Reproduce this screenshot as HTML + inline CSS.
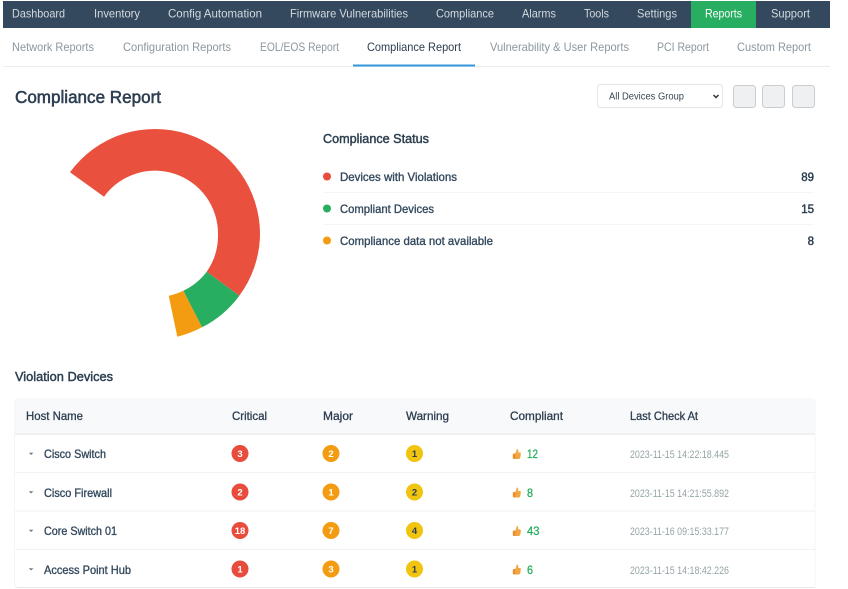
<!DOCTYPE html>
<html lang="en">
<head>
<meta charset="utf-8">
<title>Compliance Report</title>
<style>
html,body{margin:0;padding:0;background:#fff;width:848px;height:589px;overflow:hidden}
svg{display:block;position:absolute;left:0;top:0;filter:blur(.25px)}
text{font-family:"Liberation Sans",Arial,sans-serif}
.n{font-size:12px;fill:#d3d9df}
.t{font-size:12px;fill:#8b979f}
.h{font-size:12px;fill:#2c3e50;stroke:#2c3e50;stroke-width:.3px}
.s{font-size:12px;fill:#34495e;stroke:#34495e;stroke-width:.35px}
.v{font-size:11.500px;fill:#2c3e50;stroke:#2c3e50;stroke-width:.45px;text-anchor:end}
.b{font-size:9.500px;font-weight:bold;fill:#fff;text-anchor:middle}
.k{font-size:9.500px;font-weight:bold;fill:#2c3e50;text-anchor:middle}
.c{font-size:12px;fill:#27ae60;stroke:#27ae60;stroke-width:.3px}
.d{font-size:11px;fill:#95a5a6}
</style>
</head>
<body>
<svg width="848" height="589" viewBox="0 0 848 589" xmlns="http://www.w3.org/2000/svg">
<rect x="3" y="1" width="827" height="27" fill="#34495e"/>
<rect x="691" y="1" width="65" height="27" fill="#27ae60"/>
<text class="n" x="12" y="17.500" textLength="53" lengthAdjust="spacingAndGlyphs">Dashboard</text>
<text class="n" x="94" y="17.500" textLength="46" lengthAdjust="spacingAndGlyphs">Inventory</text>
<text class="n" x="168" y="17.500" textLength="94" lengthAdjust="spacingAndGlyphs">Config Automation</text>
<text class="n" x="290" y="17.500" textLength="118" lengthAdjust="spacingAndGlyphs">Firmware Vulnerabilities</text>
<text class="n" x="436" y="17.500" textLength="58" lengthAdjust="spacingAndGlyphs">Compliance</text>
<text class="n" x="522" y="17.500" textLength="34" lengthAdjust="spacingAndGlyphs">Alarms</text>
<text class="n" x="584" y="17.500" textLength="25" lengthAdjust="spacingAndGlyphs">Tools</text>
<text class="n" x="637" y="17.500" textLength="40" lengthAdjust="spacingAndGlyphs">Settings</text>
<text class="n" x="705" y="17.500" textLength="37" lengthAdjust="spacingAndGlyphs" style="fill:#fff">Reports</text>
<text class="n" x="771" y="17.500" textLength="39" lengthAdjust="spacingAndGlyphs">Support</text>

<rect x="3" y="66" width="827" height="1" fill="#ececec"/>
<rect x="353" y="64.500" width="122" height="2" fill="#3498db"/>
<text class="t" x="12" y="51" textLength="82" lengthAdjust="spacingAndGlyphs">Network Reports</text>
<text class="t" x="123" y="51" textLength="108" lengthAdjust="spacingAndGlyphs">Configuration Reports</text>
<text class="t" x="260" y="51" textLength="79" lengthAdjust="spacingAndGlyphs">EOL/EOS Report</text>
<text class="t" x="367" y="51" textLength="94" lengthAdjust="spacingAndGlyphs" style="fill:#2c3e50">Compliance Report</text>
<text class="t" x="490" y="51" textLength="139" lengthAdjust="spacingAndGlyphs">Vulnerability &amp; User Reports</text>
<text class="t" x="657" y="51" textLength="52" lengthAdjust="spacingAndGlyphs">PCI Report</text>
<text class="t" x="737" y="51" textLength="74" lengthAdjust="spacingAndGlyphs">Custom Report</text>

<text x="15" y="103" textLength="146" lengthAdjust="spacingAndGlyphs" style="font-size:17.500px;fill:#2c3e50;stroke:#2c3e50;stroke-width:.55px">Compliance Report</text>

<rect x="597.500" y="84.500" width="125" height="23" rx="3" fill="#fff" stroke="#e6e6e6"/>
<text x="609" y="99.500" textLength="75" lengthAdjust="spacingAndGlyphs" style="font-size:10px;fill:#3a4654">All Devices Group</text>
<path d="M713.500 95l2.500 2.500 2.500-2.500" fill="none" stroke="#333" stroke-width="1.500"/>
<rect x="733.500" y="85.500" width="22" height="22" rx="3" fill="#eef0f1" stroke="#c9cdd0"/>
<rect x="762.500" y="85.500" width="22" height="22" rx="3" fill="#eef0f1" stroke="#c9cdd0"/>
<rect x="792.500" y="85.500" width="22" height="22" rx="3" fill="#eef0f1" stroke="#c9cdd0"/>

<path d="M70 172.300A105 105 0 0 1 260 234.500A105 105 0 0 1 239.300 295.700L206.700 271.700A63 63 0 0 0 218 234.500A63 63 0 0 0 104 196.700Z" fill="#ea503e"/>
<path d="M239.300 295.700A105 105 0 0 1 202 327.300L183.300 290.700A63 63 0 0 0 206.700 271.700Z" fill="#27ae60"/>
<path d="M202 327.300A105 105 0 0 1 177.300 336.700L168.700 295.700A63 63 0 0 0 183.300 290.700Z" fill="#f39c12"/>

<text x="323" y="143" textLength="106" lengthAdjust="spacingAndGlyphs" style="font-size:13px;fill:#2c3e50;stroke:#2c3e50;stroke-width:.45px">Compliance Status</text>
<rect x="323" y="192" width="491" height="1" fill="#f4f5f5"/>
<rect x="323" y="224" width="491" height="1" fill="#f4f5f5"/>
<circle cx="327" cy="176.500" r="4" fill="#e74c3c"/>
<circle cx="327" cy="208.500" r="4" fill="#27ae60"/>
<circle cx="327" cy="240.500" r="4" fill="#f39c12"/>
<text class="s" x="340" y="181" textLength="117" lengthAdjust="spacingAndGlyphs">Devices with Violations</text>
<text class="s" x="340" y="213" textLength="94" lengthAdjust="spacingAndGlyphs">Compliant Devices</text>
<text class="s" x="340" y="245" textLength="153" lengthAdjust="spacingAndGlyphs">Compliance data not available</text>
<text class="v" x="814" y="181">89</text>
<text class="v" x="814" y="213">15</text>
<text class="v" x="814" y="245">8</text>

<text x="15" y="381" textLength="98" lengthAdjust="spacingAndGlyphs" style="font-size:13px;fill:#2c3e50;stroke:#2c3e50;stroke-width:.45px">Violation Devices</text>

<rect x="15" y="398" width="800" height="190" rx="4" fill="#fff"/>
<rect x="14.500" y="398.500" width="800.500" height="189.500" rx="4" fill="none" stroke="#f4f5f6"/>
<path d="M15 433V402a4 4 0 0 1 4-4H811a4 4 0 0 1 4 4V433Z" fill="#f8f9fa"/>
<rect x="15" y="433" width="800" height="2" fill="#eef0f1"/>
<rect x="15" y="472" width="800" height="1" fill="#f1f2f3"/>
<rect x="15" y="510.500" width="800" height="1" fill="#f1f2f3"/>
<rect x="15" y="549" width="800" height="1" fill="#f1f2f3"/>
<rect x="15" y="587" width="800" height="1" fill="#e9ebec"/>

<text class="h" x="26" y="420" textLength="57" lengthAdjust="spacingAndGlyphs">Host Name</text>
<text class="h" x="232" y="420" textLength="35" lengthAdjust="spacingAndGlyphs">Critical</text>
<text class="h" x="323" y="420" textLength="30" lengthAdjust="spacingAndGlyphs">Major</text>
<text class="h" x="406" y="420" textLength="43" lengthAdjust="spacingAndGlyphs">Warning</text>
<text class="h" x="510" y="420" textLength="53" lengthAdjust="spacingAndGlyphs">Compliant</text>
<text class="h" x="630" y="420" textLength="68" lengthAdjust="spacingAndGlyphs">Last Check At</text>

<path d="M28.800 452.800h4.600l-2.300 2.200z" fill="#777"/>
<path d="M28.800 491.300h4.600l-2.300 2.200z" fill="#777"/>
<path d="M28.800 529.800h4.600l-2.300 2.200z" fill="#777"/>
<path d="M28.800 568.300h4.600l-2.300 2.200z" fill="#777"/>
<text class="s" x="44" y="458" textLength="62" lengthAdjust="spacingAndGlyphs">Cisco Switch</text>
<text class="s" x="44" y="497" textLength="68" lengthAdjust="spacingAndGlyphs">Cisco Firewall</text>
<text class="s" x="44" y="535" textLength="73" lengthAdjust="spacingAndGlyphs">Core Switch 01</text>
<text class="s" x="44" y="574" textLength="87" lengthAdjust="spacingAndGlyphs">Access Point Hub</text>

<circle cx="240" cy="453.500" r="8.500" fill="#e74c3c"/><text class="b" x="240" y="456.800">3</text>
<circle cx="240" cy="492" r="8.500" fill="#e74c3c"/><text class="b" x="240" y="495.300">2</text>
<circle cx="240" cy="530.500" r="8.500" fill="#e74c3c"/><text class="b" x="240" y="533.800">18</text>
<circle cx="240" cy="569" r="8.500" fill="#e74c3c"/><text class="b" x="240" y="572.300">1</text>

<circle cx="331" cy="453.500" r="8.500" fill="#f39c12"/><text class="b" x="331" y="456.800">2</text>
<circle cx="331" cy="492" r="8.500" fill="#f39c12"/><text class="b" x="331" y="495.300">1</text>
<circle cx="331" cy="530.500" r="8.500" fill="#f39c12"/><text class="b" x="331" y="533.800">7</text>
<circle cx="331" cy="569" r="8.500" fill="#f39c12"/><text class="b" x="331" y="572.300">3</text>

<circle cx="414.500" cy="453.500" r="8.500" fill="#f1c40f"/><text class="k" x="414.500" y="456.800">1</text>
<circle cx="414.500" cy="492" r="8.500" fill="#f1c40f"/><text class="k" x="414.500" y="495.300">2</text>
<circle cx="414.500" cy="530.500" r="8.500" fill="#f1c40f"/><text class="k" x="414.500" y="533.800">4</text>
<circle cx="414.500" cy="569" r="8.500" fill="#f1c40f"/><text class="k" x="414.500" y="572.300">1</text>

<defs><g id="th"><path d="M4 0C5.200 0 5.600 1.200 5.400 2.400L5.200 3.400H6.800C7.700 3.400 8.200 4.100 8 5L7.500 8.500C7.300 9.400 6.700 10 5.800 10H2.200C1.900 7 2 5.600 2.400 4.600 3.200 3.400 3.600 1.600 4 0Z" fill="#f3a63f"/><path d="M0 5.500C0 4.900.5 4.500 1 4.500H2.600V10H1.200C.5 10 0 9.500 0 8.800Z" fill="#e8902e"/></g></defs>
<use href="#th" x="512.800" y="449"/>
<use href="#th" x="512.800" y="487.500"/>
<use href="#th" x="512.800" y="526"/>
<use href="#th" x="512.800" y="564.500"/>
<text class="c" x="527" y="458" textLength="11" lengthAdjust="spacingAndGlyphs">12</text>
<text class="c" x="527" y="497" textLength="6" lengthAdjust="spacingAndGlyphs">8</text>
<text class="c" x="527" y="535" textLength="12.500" lengthAdjust="spacingAndGlyphs">43</text>
<text class="c" x="527" y="574" textLength="6" lengthAdjust="spacingAndGlyphs">6</text>

<text class="d" x="630" y="458" textLength="99" lengthAdjust="spacingAndGlyphs">2023-11-15 14:22:18.445</text>
<text class="d" x="630" y="497" textLength="99" lengthAdjust="spacingAndGlyphs">2023-11-15 14:21:55.892</text>
<text class="d" x="630" y="535" textLength="99" lengthAdjust="spacingAndGlyphs">2023-11-16 09:15:33.177</text>
<text class="d" x="630" y="574" textLength="99" lengthAdjust="spacingAndGlyphs">2023-11-15 14:18:42.226</text>
</svg>
</body>
</html>
